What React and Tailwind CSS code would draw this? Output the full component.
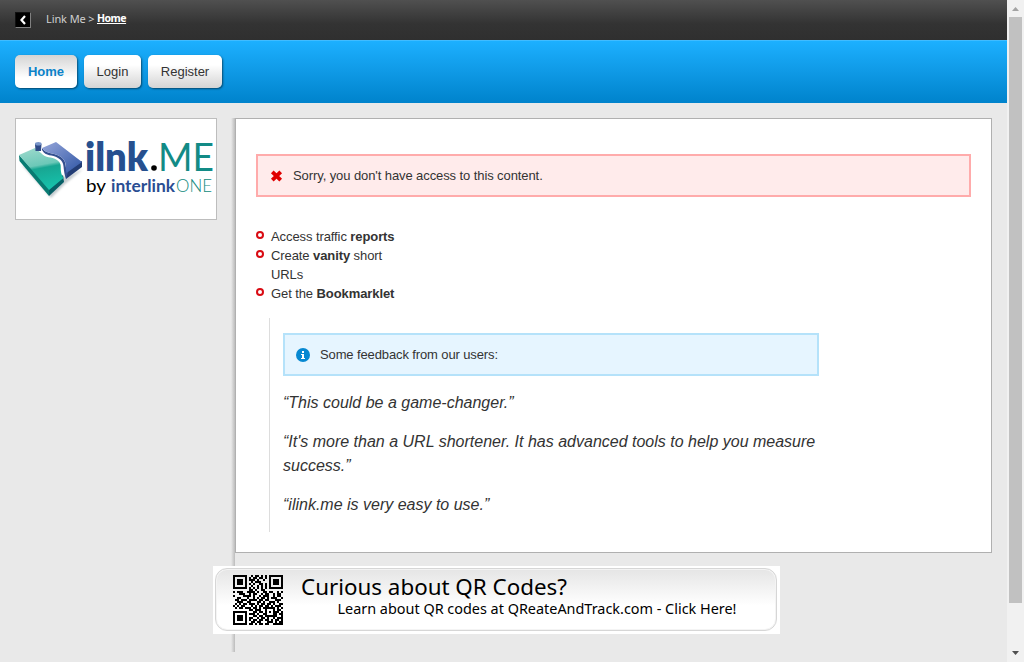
const QR = [
"1111111001011010101111111",
"1000001010110110101000001",
"1011101011101001001011101",
"1011101001011100001011101",
"1011101010100110101011101",
"1000001001001010101000001",
"1111111010101010101111111",
"0000000011010011000000000",
"1011100111101001101100101",
"0001110010110010110010110",
"1000011110100101110010110",
"0011000100101011010111001",
"0110111011110110110001110",
"0011100110001101001110100",
"0101011011101011011010011",
"1010110001010110110101110",
"0101101110110101111110101",
"0000000011011100100010110",
"1111111000110110101011101",
"1000001011101001100011011",
"1011101000110110111111001",
"1011101011001011010010111",
"1011101010110110110101101",
"1000001001101100011101011",
"1111111011010110110011111",
];

function QrCode() {
  return (
    <svg width="50" height="50" viewBox="0 0 25 25" shapeRendering="crispEdges" className="shrink-0">
      {QR.flatMap((row, y) =>
        [...row].map((c, x) => (c === "1" ? <rect key={`${x}-${y}`} x={x} y={y} width="1" height="1" /> : null))
      )}
    </svg>
  );
}

function Logo() {
  return (
    <svg width="200" height="100" viewBox="0 0 200 100">
      <defs>
        <linearGradient id="teal" x1="0.3" y1="0" x2="0.5" y2="1">
          <stop offset="0" stopColor="#9ad8cb" />
          <stop offset="0.42" stopColor="#6cc8b8" />
          <stop offset="0.5" stopColor="#18a692" />
          <stop offset="1" stopColor="#16c2ac" />
        </linearGradient>
        <linearGradient id="blue" x1="0" y1="0" x2="1" y2="1">
          <stop offset="0" stopColor="#96a6da" />
          <stop offset="1" stopColor="#2e55a4" />
        </linearGradient>
        <filter id="soft"><feGaussianBlur stdDeviation="1" /></filter>
      </defs>
      <path d="M6 46L35 79L49 65L67 50L50 58Z" fill="#c3cace" filter="url(#soft)" />
      <path d="M3 36L3.5 42L33 77L33 69Z" fill="#087b72" />
      <path d="M33 69L33 77L48 63L47 56Z" fill="#075f66" />
      <path d="M3 36L19 29L25 34C30 40 35 37 41 41C48 46 42 50 47.5 59L33 71Z" fill="url(#teal)" />
      <path d="M19 25L19.5 32L25 32L25.5 25Z" fill="#2f4a86" />
      <ellipse cx="22.3" cy="24.8" rx="3.3" ry="1.8" fill="#7995c9" />
      <path d="M50 50L50 60L66 48L66 42Z" fill="#233d75" />
      <path d="M26 31C30 38 36 35 42 39C50 44 46 48 50 60L52 53C48 49 52 43 45 38C38 33 31 36 26 29Z" fill="#34508f" />
      <path d="M26 29L40 23L66 43L50.5 54C49 49 52 43 45 38C38 33 31 36 26 29Z" fill="url(#blue)" />
      <g fontFamily="Lato, sans-serif">
        <text x="69" y="52" fontSize="39" fontWeight="800" fill="#26508f" textLength="63" lengthAdjust="spacingAndGlyphs">ilnk</text>
        <circle cx="138" cy="49" r="2.8" fill="#000" />
        <text x="142" y="52" fontSize="38" fontWeight="400" fill="#128b86" textLength="56" lengthAdjust="spacingAndGlyphs">ME</text>
        <text x="70" y="73" fontSize="18" fill="#000" textLength="20" lengthAdjust="spacingAndGlyphs">by</text>
        <text x="95" y="73" fontSize="17" fontWeight="700" fill="#2a4d92" textLength="64" lengthAdjust="spacingAndGlyphs">interlink</text>
        <text x="160" y="73" fontSize="17.5" fontWeight="300" fill="#128b80" textLength="36" lengthAdjust="spacingAndGlyphs">ONE</text>
      </g>
    </svg>
  );
}

const tab = "flex h-[33px] items-center justify-center rounded-[5px] shadow-[1px_1px_2px_rgba(0,0,0,0.5)] text-[13px]";

function Bullet({ children }) {
  return (
    <li className="flex">
      <span className="mt-1 mr-[7px] h-2 w-2 shrink-0 rounded-full border-2 border-[#d90b13]" />
      <span>{children}</span>
    </li>
  );
}

export default function App() {
  return (
    <div className="flex h-[662px] w-[1024px] overflow-hidden bg-[#e9e9e9] font-['Liberation_Sans',Arial,sans-serif] text-[13px] leading-[19px] text-[#333]">
      <div className="flex w-[1007px] flex-col">
        <header className="flex h-10 items-center bg-linear-to-b from-[#505050] via-[#333] via-60% to-[#2f2f2f] pl-[15px] font-['Noto_Sans',sans-serif] text-[11px] text-[#d0d0d0]">
          <span className="mr-[15px] flex h-4 w-4 items-center justify-center border border-[#111] border-r-[#808080] border-b-[#808080] bg-black">
            <svg width="14" height="14" viewBox="0 0 14 14">
              <path d="M9 3L5.5 7L9 11" fill="none" stroke="#fff" strokeWidth="2.2" />
            </svg>
          </span>
          <span className="mb-[3px] w-[51px] whitespace-nowrap tracking-[-0.1px]">Link Me &gt;</span>
          <a className="mb-[3px] text-[10.5px] font-bold tracking-[-0.5px] text-white underline">Home</a>
        </header>
        <nav className="flex h-[63px] gap-[7px] border-t border-[#40bcff] bg-linear-to-b from-[#1cb0ff] to-[#0083cc] pt-[14px] pl-[15px]">
          <a className={`${tab} w-[62px] bg-linear-to-b from-[#d4d4d4] to-white to-70% font-bold text-[#0b83c9]`}>Home</a>
          <a className={`${tab} w-[57px] bg-linear-to-b from-white from-30% to-[#d4d4d4]`}>Login</a>
          <a className={`${tab} w-[74px] bg-linear-to-b from-white from-30% to-[#d4d4d4]`}>Register</a>
        </nav>
        <main className="flex pt-[15px] pl-[15px]">
          <aside className="mr-[14px] h-[102px] w-[202px] border border-[#bdbdbd] bg-white">
            <Logo />
          </aside>
          <div className="h-[534px] w-1 bg-linear-to-r from-[#e9e9e9] to-[#bcbcbc]" />
          <div className="w-[757px]">
            <section className="h-[435px] border border-[#b0b0b0] bg-white pt-[35px] pl-5 tracking-[-0.09px]">
              <div className="flex h-[43px] w-[715px] items-center border-2 border-[#ffabab] bg-[#ffebeb] pl-[12px]">
                <svg width="13" height="12" viewBox="0 0 12 12" className="mt-[1px] mr-[10px]">
                  <path d="M1.8 1.8L10.2 10.2M10.2 1.8L1.8 10.2" stroke="#e00000" strokeWidth="3.8" />
                </svg>
                Sorry, you don't have access to this content.
              </div>
              <ul className="mt-[30px] w-[150px]">
                <Bullet>Access traffic <b>reports</b></Bullet>
                <Bullet>Create <b>vanity</b> short<br />URLs</Bullet>
                <Bullet>Get the <b>Bookmarklet</b></Bullet>
              </ul>
              <blockquote className="mt-[15px] ml-[13px] h-[214px] w-[550px] border-l border-[#ddd] pt-[15px] pl-[13px]">
                <div className="flex h-[43px] items-center border-2 border-[#b5e2fa] bg-[#e6f5ff] pl-[11px] tracking-[-0.12px]">
                  <svg width="14" height="14" viewBox="0 0 14 14" className="mr-[10px]">
                    <circle cx="7" cy="7" r="7" fill="#0788d1" />
                    <path d="M6 3h2v2H6zM5 6h3v4h1v1H5v-1h1V7H5z" fill="#fff" />
                  </svg>
                  Some feedback from our users:
                </div>
                <div className="mt-[15px] space-y-[15px] text-base leading-6 tracking-normal italic">
                  <p>“This could be a game-changer.”</p>
                  <p>“It's more than a URL shortener. It has advanced tools to help you measure<br />success.”</p>
                  <p>“ilink.me is very easy to use.”</p>
                </div>
              </blockquote>
            </section>
            <a className="relative -ml-[22px] mt-[13px] flex h-[68px] w-[567px] bg-white p-[2px]">
              <span className="flex h-[63px] w-[562px] rounded-[12px] border border-[#d6d6d6] bg-linear-to-b from-[#e5e5e5] to-white to-60% pt-[6px] pl-[17px] text-black shadow-[inset_0_0_0_1px_#f4f4f4]">
                <QrCode />
                <svg width="460" height="60" viewBox="0 -8 460 60" className="-mt-2 shrink-0" fontFamily="Noto Sans, sans-serif">
                  <text x="18" y="20" fontSize="22.5" textLength="266" lengthAdjust="spacingAndGlyphs">Curious about QR Codes?</text>
                  <text x="54.5" y="39" fontSize="14.5" textLength="399" lengthAdjust="spacingAndGlyphs">Learn about QR codes at QReateAndTrack.com - Click Here!</text>
                </svg>
              </span>
            </a>
          </div>
        </main>
      </div>
      <div className="flex w-[17px] flex-col items-center bg-[#f1f1f1]">
        <svg width="17" height="17"><path d="M5 11L8.5 7L12 11Z" fill="#a3a3a3" /></svg>
        <div className="h-[586px] w-[13px] bg-[#c1c1c1]" />
        <svg width="17" height="17" className="mt-auto"><path d="M5 6L8.5 10L12 6Z" fill="#505050" /></svg>
      </div>
    </div>
  );
}
